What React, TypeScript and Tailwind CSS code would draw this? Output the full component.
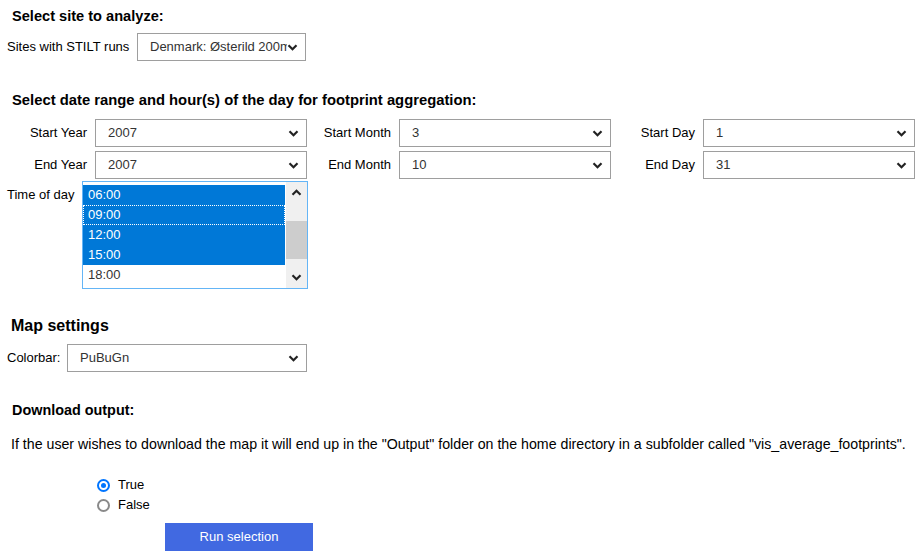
import React from 'react'

const Chevron = ({ up = false }: { up?: boolean }) => (
  <svg width="11" height="7" viewBox="0 0 11 7" className={up ? 'rotate-180' : ''}>
    <path d="M1.5 1.3 L5.5 5.2 L9.5 1.3" fill="none" stroke="#222" strokeWidth="2.2" />
  </svg>
)

const Select = ({ value, width }: { value: string; width: string }) => (
  <div className={`relative flex items-center h-[28px] border border-[#9e9e9e] bg-white ${width}`}>
    <span className="flex-1 min-w-0 ml-[12px] mr-[18px] text-[#333] whitespace-nowrap overflow-hidden">{value}</span>
    <span className="absolute right-[7px] top-[10px] flex">
      <Chevron />
    </span>
  </div>
)

const Field = ({ label, value }: { label: string; value: string }) => (
  <div className="flex items-center">
    <span className="w-[88px] text-right pr-[8px] whitespace-nowrap">{label}</span>
    <Select value={value} width="w-[212px]" />
  </div>
)

const hours = [
  { t: '06:00', sel: true },
  { t: '09:00', sel: true, focus: true },
  { t: '12:00', sel: true },
  { t: '15:00', sel: true },
  { t: '18:00', sel: false },
]

const App = () => {
  return (
    <div className="min-h-screen bg-white font-['Liberation_Sans',Arial,sans-serif] text-[13px] leading-[16px] text-black pl-[7px] pt-[8px]">
      <h3 className="ml-[5px] text-[14.6px] font-bold leading-[16px]">Select site to analyze:</h3>
      <div className="flex items-center mt-[9px]">
        <span className="w-[130px]">Sites with STILT runs</span>
        <Select value="Denmark: Østerild 200m" width="w-[169px]" />
      </div>

      <h3 className="ml-[5px] mt-[31px] text-[14.8px] font-bold leading-[16px]">
        Select date range and hour(s) of the day for footprint aggregation:
      </h3>
      <div className="grid grid-cols-[300px_300px_300px] gap-x-[4px] gap-y-[4px] mt-[11px]">
        <Field label="Start Year" value="2007" />
        <Field label="Start Month" value="3" />
        <Field label="Start Day" value="1" />
        <Field label="End Year" value="2007" />
        <Field label="End Month" value="10" />
        <Field label="End Day" value="31" />
      </div>

      <div className="flex mt-[2px]">
        <span className="w-[75px] pt-[6px]">Time of day</span>
        <div className="flex w-[226px] h-[108px] border border-[#64b5f6] bg-white">
          <div className="flex-1 pt-[3px] pr-[1px]">
            {hours.map((h) => (
              <div
                key={h.t}
                className={`h-[20px] pl-[5px] flex items-center ${
                  h.sel ? 'bg-[#0078d7] text-white' : 'text-[#333]'
                } ${h.focus ? 'outline-1 outline-dotted outline-white -outline-offset-1' : ''}`}
              >
                {h.t}
              </div>
            ))}
          </div>
          <div className="w-[21px] bg-[#f0f0f0] flex flex-col items-center">
            <div className="h-[21px] flex items-center justify-center">
              <Chevron up />
            </div>
            <div className="h-[18px]" />
            <div className="w-full h-[38px] bg-[#cdcdcd]" />
            <div className="flex-1" />
            <div className="h-[21px] flex items-center justify-center">
              <Chevron />
            </div>
          </div>
        </div>
      </div>

      <h2 className="ml-[4px] mt-[27px] text-[16px] font-bold leading-[20px]">Map settings</h2>
      <div className="flex items-center mt-[8px]">
        <span className="w-[60px]">Colorbar:</span>
        <Select value="PuBuGn" width="w-[240px]" />
      </div>

      <h3 className="ml-[5px] mt-[30px] text-[14.4px] font-bold leading-[16px]">Download output:</h3>
      <p className="ml-[4px] mt-[18px] text-[14.2px]">
        If the user wishes to download the map it will end up in the "Output" folder on the home directory in a subfolder
        called "vis_average_footprints".
      </p>

      <div className="ml-[90px] mt-[23px] flex flex-col">
        <label className="flex items-center h-[20px] gap-[8px]">
          <span className="w-[13px] h-[13px] rounded-full border-2 border-[#0075ff] flex items-center justify-center">
            <span className="w-[5px] h-[5px] rounded-full bg-[#0075ff]" />
          </span>
          <span>True</span>
        </label>
        <label className="flex items-center h-[20px] gap-[8px]">
          <span className="w-[13px] h-[13px] rounded-full border-2 border-[#8a8a8a]" />
          <span>False</span>
        </label>
      </div>

      <button className="ml-[158px] mt-[8px] w-[148px] h-[28px] bg-[#4169e1] text-white text-[13px]">
        Run selection
      </button>
    </div>
  )
}

export default App
